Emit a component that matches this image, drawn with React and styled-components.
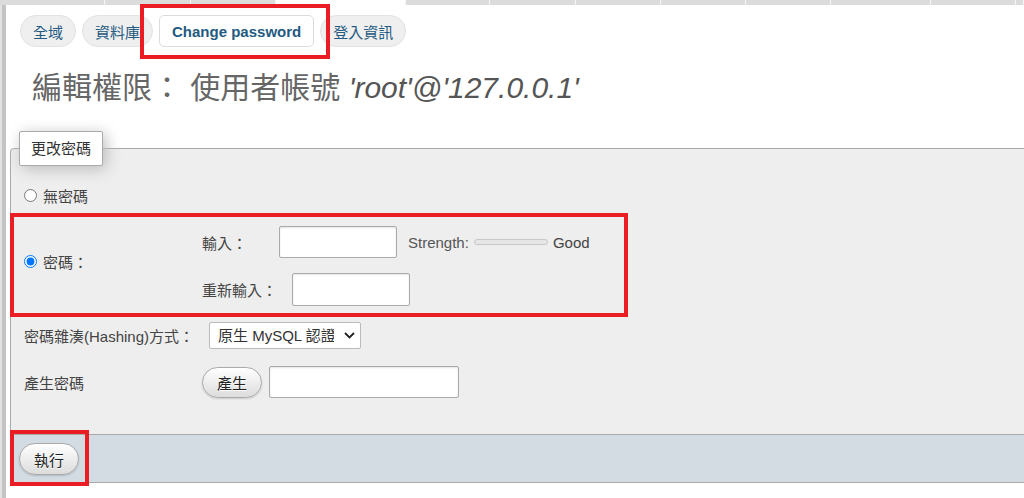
import React from "react";
import styled, { createGlobalStyle } from "styled-components";

const GlobalStyle = createGlobalStyle`
  html, body { margin: 0; padding: 0; background: #fff; overflow: hidden; }
  body {
    font-family: "Liberation Sans", "Noto Sans CJK TC", sans-serif;
    font-size: 15px;
    color: #444;
  }
`;

const Page = styled.div`
  position: relative;
  width: 1024px;
  height: 498px;
  overflow: hidden;
`;

const TopMenu = styled.div`
  display: flex;
  height: 5px;
  background: #dcdcdc;
`;

const TopTab = styled.div`
  flex: none;
  width: ${(p) => p.$w}px;
  box-sizing: border-box;
  background: ${(p) => (p.$active ? "#fff" : "#dcdcdc")};
  border-right: 1px solid #f6f6f6;
`;

const Body = styled.div`
  display: flex;
  height: 493px;
`;

const LeftRail = styled.div`
  flex: none;
  width: 6px;
  box-sizing: border-box;
  border-left: 2px solid #e2e2e2;
  background: #c4c4c4;
`;

const Main = styled.div`
  flex: 1;
  min-width: 0;
`;

const SubTabs = styled.nav`
  display: flex;
  gap: 6px;
  margin: 10px 0 0 14px;
`;

const SubTab = styled.a`
  display: flex;
  align-items: center;
  height: 32px;
  box-sizing: border-box;
  padding: 0 12px;
  border: 1px solid ${(p) => (p.$active ? "#dcdcdc" : "#e2e2e2")};
  border-radius: ${(p) => (p.$active ? "5px" : "16px")};
  background: ${(p) => (p.$active ? "#fff" : "#efefef")};
  color: #235a81;
  font-weight: ${(p) => (p.$active ? "bold" : "normal")};
  font-size: 15px;
  text-decoration: none;
  white-space: nowrap;
`;

const Title = styled.h2`
  margin: 23px 0 0 26px;
  font-size: 30px;
  line-height: 36px;
  font-weight: normal;
  color: #666;
  white-space: nowrap;
`;

const Account = styled.i`
  color: #555;
`;

const Fieldset = styled.fieldset`
  margin: 25px -40px 0 4px;
  padding: 17px 0 36px 13px;
  border: 1px solid #aaa;
  border-radius: 4px 4px 0 0;
  background: #eee;
  min-width: 0;
`;

const Legend = styled.legend`
  margin-left: -5px;
  padding: 0 11px;
  height: 35px;
  box-sizing: border-box;
  line-height: 33px;
  border: 1px solid #aaa;
  border-radius: 2px;
  background: #fff;
  color: #333;
  box-shadow: 3px 3px 15px #bbb;
`;

const RadioLabel = styled.label`
  display: flex;
  align-items: center;
  gap: 6px;
  height: 24px;
  width: ${(p) => p.$w || "auto"};
  flex: none;
  margin-bottom: ${(p) => p.$lift || 0}px;
`;

const Radio = styled.input`
  margin: 0;
  width: 13px;
  height: 13px;
`;

const PasswordBlock = styled.div`
  display: flex;
  align-items: center;
  margin-top: 19px;
`;

const Stack = styled.div`
  display: flex;
  flex-direction: column;
  gap: 15px;
`;

const Row = styled.div`
  display: flex;
  align-items: center;
  margin-top: ${(p) => p.$top || 0}px;
`;

const FieldLabel = styled.span`
  flex: none;
  width: ${(p) => p.$w}px;
  white-space: nowrap;
`;

const TextInput = styled.input`
  box-sizing: border-box;
  width: ${(p) => p.$w}px;
  height: ${(p) => p.$h || 32}px;
  margin: 0;
  border: 1px solid #aaa;
  border-radius: 2px;
  background: #fff;
  box-shadow: inset 0 1px 2px #e4e4e4;
  font: inherit;
`;

const Strength = styled.span`
  margin-left: 11px;
  color: #555;
`;

const Meter = styled.span`
  display: block;
  width: 74px;
  height: 6px;
  box-sizing: border-box;
  margin: 0 5px;
  border: 1px solid #c8c8c8;
  border-radius: 4px;
  background: #e6e6e6;
`;

const SelectWrap = styled.div`
  position: relative;
  width: 152px;
  height: 27px;
`;

const Select = styled.select`
  appearance: none;
  width: 100%;
  height: 100%;
  box-sizing: border-box;
  margin: 0;
  padding: 0 26px 0 8px;
  border: 1px solid #bbb;
  border-radius: 2px;
  background: #fff;
  color: #333;
  font: inherit;
`;

const Chevron = styled.svg`
  position: absolute;
  right: 6px;
  top: 10px;
  pointer-events: none;
`;

const Button = styled.button`
  flex: none;
  width: 60px;
  height: ${(p) => p.$h || 32}px;
  margin-right: ${(p) => p.$gap || 0}px;
  padding: 0;
  border: 1px solid #aaa;
  border-radius: 16px;
  background: linear-gradient(#ffffff, #dcdcdc);
  box-shadow: 0 1px 2px rgba(0, 0, 0, 0.15);
  color: #222;
  font: inherit;
  text-shadow: 0 1px 0 #fff;
`;

const Footer = styled.div`
  margin: 0 -40px 0 4px;
  padding: 8px 8px 7px;
  border: 1px solid #aaa;
  border-top: none;
  background: #d3dce3;
`;

const RedMark = styled.div`
  position: absolute;
  left: ${(p) => p.$x}px;
  top: ${(p) => p.$y}px;
  width: ${(p) => p.$w}px;
  height: ${(p) => p.$h}px;
  box-sizing: border-box;
  border: 4px solid #ea1d25;
  pointer-events: none;
`;

const topTabs = [105, 86, 85, 130, 84, 86, 85, 85, 85, 100, 85, 8];

export default function App() {
  return (
    <Page>
      <GlobalStyle />
      <TopMenu>
        {topTabs.map((w, i) => (
          <TopTab key={i} $w={w} $active={i === 3} />
        ))}
      </TopMenu>
      <Body>
        <LeftRail />
        <Main>
          <SubTabs>
            <SubTab>全域</SubTab>
            <SubTab>資料庫</SubTab>
            <SubTab $active>Change password</SubTab>
            <SubTab>登入資訊</SubTab>
          </SubTabs>
          <Title>
            編輯權限： 使用者帳號 <Account>'root'@'127.0.0.1'</Account>
          </Title>
          <form>
            <Fieldset>
              <Legend>更改密碼</Legend>
              <RadioLabel>
                <Radio type="radio" name="pw" />
                無密碼
              </RadioLabel>
              <PasswordBlock>
                <RadioLabel $w="178px" $lift={10}>
                  <Radio type="radio" name="pw" defaultChecked />
                  密碼：
                </RadioLabel>
                <Stack>
                  <Row>
                    <FieldLabel $w={77}>輸入：</FieldLabel>
                    <TextInput type="password" $w={118} />
                    <Strength>Strength:</Strength>
                    <Meter />
                    <span>Good</span>
                  </Row>
                  <Row>
                    <FieldLabel $w={90}>重新輸入：</FieldLabel>
                    <TextInput type="password" $w={118} $h={33} />
                  </Row>
                </Stack>
              </PasswordBlock>
              <Row $top={16}>
                <FieldLabel $w={185}>密碼雜湊(Hashing)方式：</FieldLabel>
                <SelectWrap>
                  <Select defaultValue="native">
                    <option value="native">原生 MySQL 認證</option>
                  </Select>
                  <Chevron width="11" height="7" viewBox="0 0 11 7">
                    <path d="M1 1l4.5 4.5L10 1" fill="none" stroke="#222" strokeWidth="1.8" />
                  </Chevron>
                </SelectWrap>
              </Row>
              <Row $top={17}>
                <FieldLabel $w={178}>產生密碼</FieldLabel>
                <Button type="button" $h={31} $gap={7}>產生</Button>
                <TextInput type="text" $w={190} />
              </Row>
            </Fieldset>
            <Footer>
              <Button type="button">執行</Button>
            </Footer>
          </form>
        </Main>
      </Body>
      <RedMark $x={140} $y={4} $w={190} $h={55} />
      <RedMark $x={10} $y={213} $w={618} $h={104} />
      <RedMark $x={10} $y={430} $w={79} $h={56} />
    </Page>
  );
}
